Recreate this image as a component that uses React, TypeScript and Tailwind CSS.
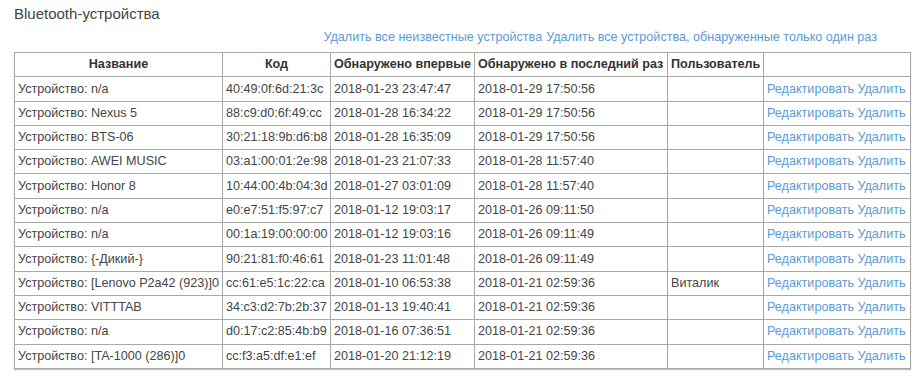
import React from 'react';

type Device = {
  name: string;
  code: string;
  first: string;
  last: string;
  user: string;
};

const devices: Device[] = [
  { name: 'n/a', code: '40:49:0f:6d:21:3c', first: '2018-01-23 23:47:47', last: '2018-01-29 17:50:56', user: '' },
  { name: 'Nexus 5', code: '88:c9:d0:6f:49:cc', first: '2018-01-28 16:34:22', last: '2018-01-29 17:50:56', user: '' },
  { name: 'BTS-06', code: '30:21:18:9b:d6:b8', first: '2018-01-28 16:35:09', last: '2018-01-29 17:50:56', user: '' },
  { name: 'AWEI MUSIC', code: '03:a1:00:01:2e:98', first: '2018-01-23 21:07:33', last: '2018-01-28 11:57:40', user: '' },
  { name: 'Honor 8', code: '10:44:00:4b:04:3d', first: '2018-01-27 03:01:09', last: '2018-01-28 11:57:40', user: '' },
  { name: 'n/a', code: 'e0:e7:51:f5:97:c7', first: '2018-01-12 19:03:17', last: '2018-01-26 09:11:50', user: '' },
  { name: 'n/a', code: '00:1a:19:00:00:00', first: '2018-01-12 19:03:16', last: '2018-01-26 09:11:49', user: '' },
  { name: '{-Дикий-}', code: '90:21:81:f0:46:61', first: '2018-01-23 11:01:48', last: '2018-01-26 09:11:49', user: '' },
  { name: '[Lenovo P2a42 (923)]0', code: 'cc:61:e5:1c:22:ca', first: '2018-01-10 06:53:38', last: '2018-01-21 02:59:36', user: 'Виталик' },
  { name: 'VITTTAB', code: '34:c3:d2:7b:2b:37', first: '2018-01-13 19:40:41', last: '2018-01-21 02:59:36', user: '' },
  { name: 'n/a', code: 'd0:17:c2:85:4b:b9', first: '2018-01-16 07:36:51', last: '2018-01-21 02:59:36', user: '' },
  { name: '[TA-1000 (286)]0', code: 'cc:f3:a5:df:e1:ef', first: '2018-01-20 21:12:19', last: '2018-01-21 02:59:36', user: '' },
];

const cell = 'border border-[#a8a8a8] px-[3px] h-[24.3px] p-0 align-middle whitespace-nowrap';

export default function App() {
  return (
    <div className="w-[918px] h-[383px] bg-white text-[#444] font-['Liberation_Sans',Arial,sans-serif] text-[12.6px] pl-[14px] pt-[5px]">
      <h2 className="text-[15px] leading-[18px] text-[#444] font-normal">Bluetooth-устройства</h2>
      <div className="flex justify-end gap-[4px] w-[863px] mt-[6px] leading-[16px] text-[#5b9bd5]">
        <a href="#">Удалить все неизвестные устройства</a>
        <a href="#">Удалить все устройства, обнаруженные только один раз</a>
      </div>
      <table className="mt-[7px] border-collapse border border-[#777] w-[896px] table-fixed shadow-[0_1px_1px_rgba(0,0,0,0.25)]">
        <colgroup>
          <col className="w-[208px]" />
          <col className="w-[108px]" />
          <col className="w-[144px]" />
          <col className="w-[193px]" />
          <col className="w-[96px]" />
          <col className="w-[147px]" />
        </colgroup>
        <thead>
          <tr className="font-bold text-[#333]">
            <th className={`${cell} text-center`}>Название</th>
            <th className={`${cell} text-center`}>Код</th>
            <th className={`${cell} text-left`}>Обнаружено впервые</th>
            <th className={`${cell} text-left`}>Обнаружено в последний раз</th>
            <th className={`${cell} text-left`}>Пользователь</th>
            <th className={cell}></th>
          </tr>
        </thead>
        <tbody>
          {devices.map((d, i) => (
            <tr key={i}>
              <td className={cell}>Устройство: {d.name}</td>
              <td className={cell}>{d.code}</td>
              <td className={cell}>{d.first}</td>
              <td className={cell}>{d.last}</td>
              <td className={cell}>{d.user}</td>
              <td className={`${cell} text-[#5b9bd5]`}>
                <a href="#">Редактировать</a> <a href="#">Удалить</a>
              </td>
            </tr>
          ))}
        </tbody>
      </table>
    </div>
  );
}
